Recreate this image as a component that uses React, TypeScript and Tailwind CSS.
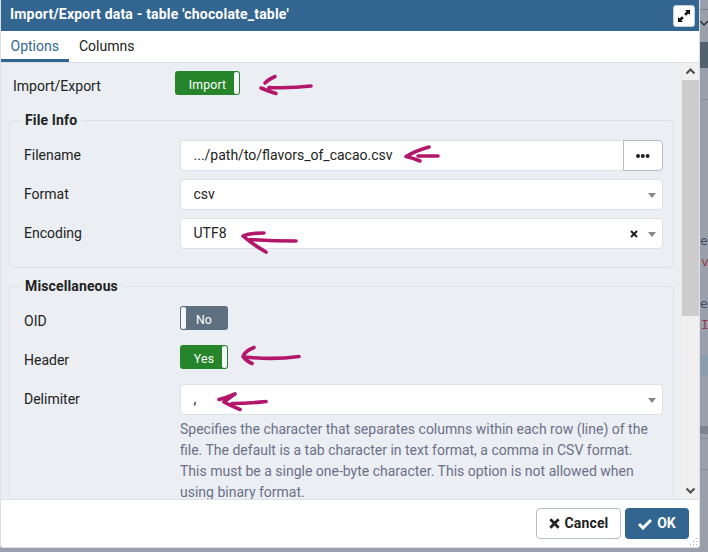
import React from 'react';

const Caret = () => (
  <svg className="shrink-0" width="8" height="5" viewBox="0 0 8 5"><path d="M0 0h8L4 5z" fill="#888" /></svg>
);

const Cross = ({ size }: { size: number }) => (
  <svg width={size} height={size} viewBox="0 0 10 10" className="shrink-0">
    <path d="M1.200 1.200l7.600 7.600M8.800 1.200l-7.600 7.600" stroke="#222" strokeWidth="2.500" />
  </svg>
);

function Row({ label, children }: { label: string; children: React.ReactNode }) {
  return (
    <div className="flex h-[31px]">
      <div className="w-[156px] shrink-0 leading-[31px]">{label}</div>
      <div className="min-w-0 flex-1">{children}</div>
    </div>
  );
}

function Select({ value, clearable }: { value: string; clearable?: boolean }) {
  return (
    <div className="flex h-[31px] items-center rounded-[4px] border border-[#dde0e6] bg-white pr-[6px] pl-[12.500px]">
      <span className="flex-1">{value}</span>
      {clearable && <span className="mr-[10px]"><Cross size={8} /></span>}
      <span className="pt-[2px]"><Caret /></span>
    </div>
  );
}

function Toggle({ label, on, wide }: { label: string; on: boolean; wide?: boolean }) {
  return (
    <div className={`flex h-6 items-center rounded-[3px] p-px text-[12.25px] tracking-[0.2px] text-white ${wide ? 'w-[65px]' : 'w-12'} ${on ? 'bg-[#26852b]' : 'flex-row-reverse bg-[#5e6f80]'}`}>
      <span className={`flex-1 pt-[4px] text-center ${on ? 'pl-[5px]' : 'pr-[5px]'}`}>{label}</span>
      <span className="h-[22px] w-[5px] rounded-[2px] bg-[#f5f8fa]" />
    </div>
  );
}

const Legend = ({ children }: { children: React.ReactNode }) => (
  <legend className="ml-[10px] h-[21px] px-[5px] text-[14px] leading-[20px] font-bold tracking-[0.13px]">{children}</legend>
);

function Arrows() {
  return (
    <svg className="pointer-events-none absolute top-0 left-0" width="708" height="552" fill="none" stroke="#b3176b" strokeWidth="3.600" strokeLinecap="round" strokeLinejoin="round">
      <path d="M265 83Q269 79 275 76.500M311 86Q290 88.500 269 87.500M261 88Q268 91 276 93.500" />
      <path d="M429 147Q415 151 406 156.500Q413 158 420 161M418 156h20" />
      <path d="M264 233Q249 233 243 236Q252 244 266 252M250 239.500Q272 241 296 241" />
      <path d="M254 347.500Q245 351 243 356.500Q246 361 252 363.500M245 357Q273 360 299 356.500" />
      <path d="M235 394Q226 398 219 399.500M224 402Q231 406 240 409.500M224 402Q229 398 235 394M232 403.500Q248 403.500 266 401.500" />
    </svg>
  );
}

export default function App() {
  return (
    <div className="relative h-[552px] w-[708px] overflow-hidden bg-[#999fab] font-['Roboto',sans-serif] text-[14px] text-[#222]">
      <div className="flex h-[548px]">
        <main className="flex w-[700px] shrink-0 flex-col overflow-hidden rounded-b-[3px] border-r border-b border-l border-[#dde0e6] bg-white">
          <header className="-mx-px flex h-[31px] shrink-0 items-center justify-between bg-[#326690] pr-[5px] pl-[10px] font-bold text-white">
            <span className="pb-[3px] tracking-[0.2px]">Import/Export data - table 'chocolate_table'</span>
            <span className="mt-[1px] flex h-[22px] w-[22px] items-center justify-center rounded-[3px] border border-[#c6d1dc] bg-white">
              <svg width="14" height="14" viewBox="0 0 14 14" fill="#111"><path d="M8 1h5v5l-1.600-1.600-2.400 2.400-1.800-1.800 2.400-2.400zM1 8l1.600 1.600L5 7.200 6.800 9 4.400 11.400 6 13H1z" /></svg>
            </span>
          </header>
          <nav className="flex h-8 shrink-0 border-b border-[#dde0e6]">
            <span className="h-[31px] w-[68px] border-b-[3px] border-[#326690] pl-[9.500px] leading-[30px] text-[#326690]">Options</span>
            <span className="pl-[10px] leading-[30px]">Columns</span>
          </nav>
          <section className="flex h-[436px] shrink-0 overflow-hidden bg-[#ebeef3]">
            <div className="w-[681px] px-2 pt-2">
              <div className="flex h-[39px] pl-[4px]">
                <span className="w-[162px] leading-[31px]">Import/Export</span>
                <Toggle label="Import" on wide />
              </div>
              <fieldset className="rounded-[4px] border border-[#dde0e6] pb-[18px]">
                <Legend>File Info</Legend>
                <div className="space-y-2 pt-[9px] pr-[10px] pl-[14px]">
                  <Row label="Filename">
                    <div className="flex h-[31px]">
                      <div className="flex-1 rounded-l-[4px] border border-r-0 border-[#dde0e6] bg-white pl-[12.500px] leading-[29px]">.../path/to/flavors_of_cacao.csv</div>
                      <div className="flex w-[40px] items-center justify-center rounded-r-[4px] border border-[#b7bccb] bg-white">
                        <svg width="14" height="4" viewBox="0 0 14 4" fill="#222"><circle cx="2" cy="2" r="2" /><circle cx="6.800" cy="2" r="2" /><circle cx="11.600" cy="2" r="2" /></svg>
                      </div>
                    </div>
                  </Row>
                  <Row label="Format"><Select value="csv" /></Row>
                  <Row label="Encoding"><Select value="UTF8" clearable /></Row>
                </div>
              </fieldset>
              <fieldset className="mt-2 h-[300px] rounded-[4px] border border-[#dde0e6]">
                <Legend>Miscellaneous</Legend>
                <div className="space-y-2 pt-[9px] pr-[10px] pl-[14px]">
                  <Row label="OID"><Toggle label="No" on={false} /></Row>
                  <Row label="Header"><Toggle label="Yes" on /></Row>
                  <Row label="Delimiter"><Select value="," /></Row>
                </div>
                <p className="mt-[4px] ml-[170px] leading-[21px] whitespace-nowrap text-[#6b7089]">
                  Specifies the character that separates columns within each row (line) of the<br />
                  file. The default is a tab character in text format, a comma in CSV format.<br />
                  This must be a single one-byte character. This option is not allowed when<br />
                  using binary format.
                </p>
              </fieldset>
            </div>
            <div className="flex w-[17px] flex-col items-center bg-[#f0f0f0]">
              <svg width="17" height="17" viewBox="0 0 17 17" className="shrink-0"><path d="M4.500 10.500L8.500 6.500l4 4" fill="none" stroke="#505050" strokeWidth="2.200" /></svg>
              <div className="h-[236px] w-full bg-[#cdcdcd]" />
              <svg width="17" height="17" viewBox="0 0 17 17" className="mt-auto shrink-0"><path d="M4.500 6.500l4 4 4-4" fill="none" stroke="#505050" strokeWidth="2.200" /></svg>
            </div>
          </section>
          <footer className="flex h-[49px] shrink-0 border-t border-[#dde0e6] pt-[8px] pl-[535px]">
            <button className="mr-[4px] flex h-[31px] w-[85px] shrink-0 items-center justify-center gap-[5px] rounded-[4px] border border-[#b7bccb] font-bold tracking-[0.15px]"><Cross size={11} />Cancel</button>
            <button className="flex h-[31px] w-[64px] shrink-0 items-center justify-center gap-[5px] rounded-[4px] bg-[#326690] font-bold text-white">
              <svg width="14" height="12" viewBox="0 0 14 12"><path d="M1 6l4 4 8-8" fill="none" stroke="#fff" strokeWidth="3" /></svg>OK
            </button>
            <svg className="mt-auto mb-[1px] shrink-0" width="9" height="9" fill="#aaa"><path d="M7 0h1v1h-1zM4 3h1v1h-1zM7 3h1v1h-1zM1 6h1v1h-1zM4 6h1v1h-1zM7 6h1v1h-1z" /></svg>
          </footer>
        </main>
        <aside className="flex w-2 flex-col overflow-hidden font-['DejaVu_Sans_Mono',monospace] text-[13px] leading-[21px] text-[#4c5059]">
          <div className="h-[10px] shrink-0 border-b border-[#7c828c]" />
          <svg className="shrink-0" width="8" height="32" viewBox="0 0 8 32"><path d="M0 11l4 4 4-4" fill="none" stroke="#333" strokeWidth="1.500" /></svg>
          <div className="h-[26px] shrink-0 bg-[#53606e]" />
          <div className="h-[32px] shrink-0 border-b border-[#868c96]" />
          <div className="mt-[130px] h-[21px] shrink-0">e</div>
          <div className="h-[21px] shrink-0 pl-px text-[#943d47]">v</div>
          <div className="mt-[21px] h-[21px] shrink-0">e</div>
          <div className="h-[21px] shrink-0 pl-px text-[#943d47]">I</div>
          <div className="mt-[20px] h-[21px] shrink-0 bg-[#8c9eae]" />
          <div className="mt-[50px] h-[8px] shrink-0 bg-[#7d8490]" />
          <div className="mt-[4px] h-[32px] shrink-0 border-y border-[#868c96]" />
        </aside>
      </div>
      <Arrows />
    </div>
  );
}
